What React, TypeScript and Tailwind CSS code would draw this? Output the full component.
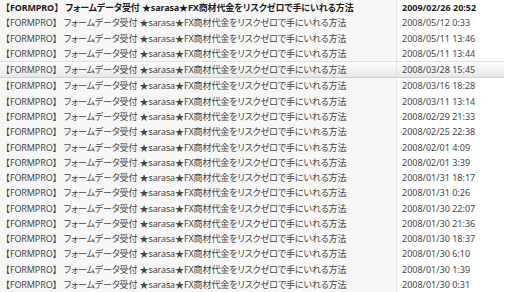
const ROWS = [
  { date: '2009/02/26 20:52', unread: true },
  { date: '2008/05/12 0:33' },
  { date: '2008/05/11 13:46' },
  { date: '2008/05/11 13:44' },
  { date: '2008/03/28 15:45', selected: true },
  { date: '2008/03/16 18:28' },
  { date: '2008/03/11 13:14' },
  { date: '2008/02/29 21:33' },
  { date: '2008/02/25 22:38' },
  { date: '2008/02/01 4:09' },
  { date: '2008/02/01 3:39' },
  { date: '2008/01/31 18:17' },
  { date: '2008/01/31 0:26' },
  { date: '2008/01/30 22:07' },
  { date: '2008/01/30 21:36' },
  { date: '2008/01/30 18:37' },
  { date: '2008/01/30 6:10' },
  { date: '2008/01/30 1:39' },
  { date: '2008/01/30 0:31' },
]

function Title() {
  return (
    <>
      <span className="[font-feature-settings:normal]">【</span>FORMPRO
      <span className="[font-feature-settings:normal]">】</span> フォームデータ受付 ★sarasa★FX商材代金をリスクゼロで手にいれる方法
    </>
  )
}

function Row({ date, unread, selected }: { date: string; unread?: boolean; selected?: boolean }) {
  return (
    <div
      className={
        'flex-1 grid grid-cols-[397px_1fr] items-center ' +
        (selected
          ? 'bg-gradient-to-b from-[#fdfdfd] to-[#e8e8e8] border-y border-[#e0e0e0] border-b-[#d2d2d2]'
          : '')
      }
    >
      <div
        className={
          'h-full flex items-center pl-[1px] border-r border-[#e4e4e4] whitespace-nowrap overflow-hidden text-[9px] tracking-[-0.12px] ' +
          (selected ? '' : 'bg-[#f7f7f7]') +
          (unread ? ' font-bold text-[#1e1e1e]' : ' text-[#474747]')
        }
      >
        <span>
          <Title />
        </span>
      </div>
      <div
        className={
          'h-full flex items-center pl-[5px] whitespace-nowrap text-[9px] ' +
          (unread ? 'font-bold text-[#1e1e1e]' : 'text-[#474747]')
        }
      >
        {date}
      </div>
    </div>
  )
}

export default function App() {
  return (
    <div className="w-[513px] h-[292px] bg-white overflow-hidden leading-none [font-feature-settings:'palt'] font-['Noto_Sans','Noto_Sans_CJK_JP',sans-serif]">
      <div className="w-[504px] h-full flex flex-col">
        {ROWS.map((r, i) => (
          <Row key={i} {...r} />
        ))}
      </div>
    </div>
  )
}
